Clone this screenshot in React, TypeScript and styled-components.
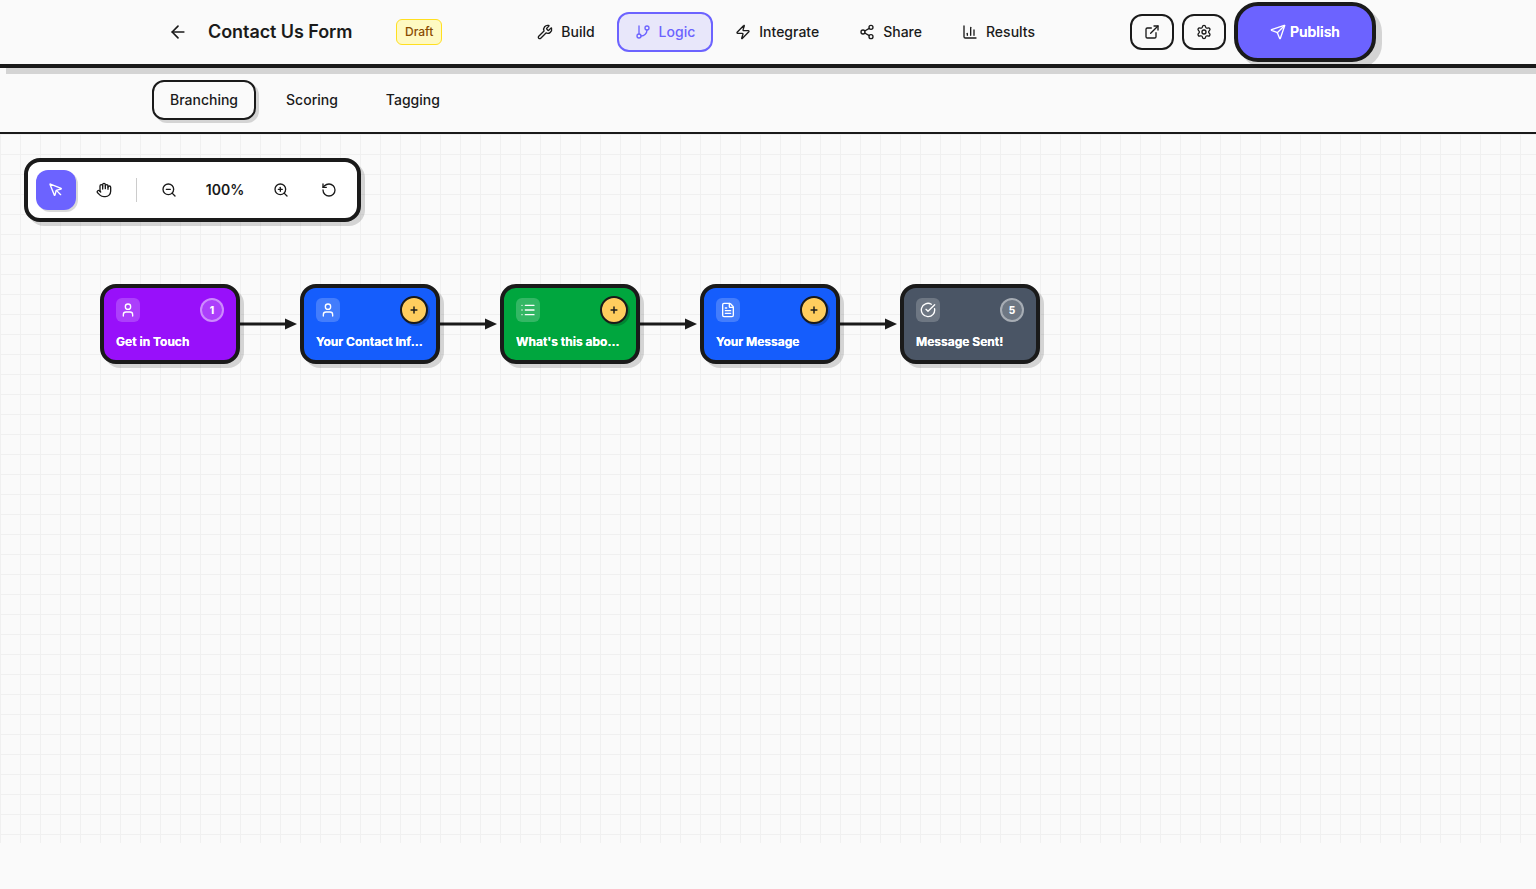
import React from "react";
import styled, { createGlobalStyle } from "styled-components";
import {
  ArrowLeft, Wrench, GitBranch, Zap, Share2, ChartColumn, ExternalLink, Settings, Send,
  MousePointer, Hand, ZoomOut, ZoomIn, RotateCcw, User, List, FileText, CircleCheckBig, Plus,
} from "lucide-react";

const INK = "#1a1a1a";
const PRIMARY = "#6c63ff";
const SHADOW = "rgba(0,0,0,0.15)";
const SANS = `Inter, "Liberation Sans", sans-serif`;

const Global = createGlobalStyle`
  html, body { margin: 0; padding: 0; height: 100%; background: #fafafa; overflow: hidden; }
  * { box-sizing: border-box; }
  body { font-family: ${SANS}; color: ${INK}; }
`;

const Header = styled.header`
  position: relative;
  z-index: 2;
  height: 68px;
  padding: 0 160px;
  display: flex;
  align-items: center;
  justify-content: space-between;
  background: #fafafa;
  border-bottom: 4px solid ${INK};
  box-shadow: 6px 6px 0 ${SHADOW};
`;
const LeftGroup = styled.div`
  display: flex;
  align-items: center;
`;
const BackButton = styled.button`
  width: 36px;
  height: 36px;
  margin-right: 12px;
  padding: 0;
  border: 0;
  background: none;
  color: ${INK};
  display: flex;
  align-items: center;
  justify-content: center;
`;
const Title = styled.h1`
  width: 144px;
  margin: 0 44px 0 0;
  font-family: Inter, sans-serif;
  font-size: 18px;
  font-weight: 600;
  line-height: 28px;
  letter-spacing: -0.07px;
  white-space: nowrap;
`;
const DraftBadge = styled.span`
  height: 26px;
  padding: 0 8px;
  display: flex;
  align-items: center;
  font-size: 12px;
  font-weight: 500;
  line-height: 16px;
  color: #894b00;
  background: #fef9c2;
  border: 1px solid #ffdf20;
  border-radius: 6px;
`;
const Nav = styled.nav`
  display: flex;
  align-items: center;
  gap: 4px;
`;
const NavItem = styled.button<{ $active?: boolean }>`
  height: 40px;
  padding: 0 16px;
  display: flex;
  align-items: center;
  gap: 8px;
  font-family: ${SANS};
  font-size: 14px;
  font-weight: 500;
  line-height: 20px;
  color: ${(p) => (p.$active ? PRIMARY : INK)};
  background: ${(p) => (p.$active ? "rgba(108,99,255,0.12)" : "transparent")};
  border: 2px solid ${(p) => (p.$active ? PRIMARY : "transparent")};
  border-radius: 12px;
`;
const Actions = styled.div`
  display: flex;
  align-items: center;
  gap: 8px;
`;
const IconAction = styled.button`
  width: 44px;
  height: 36px;
  padding: 0;
  display: flex;
  align-items: center;
  justify-content: center;
  color: ${INK};
  background: transparent;
  border: 2px solid ${INK};
  border-radius: 12px;
`;
const Publish = styled.button`
  width: 142px;
  height: 60px;
  padding: 0;
  display: flex;
  align-items: center;
  justify-content: center;
  gap: 4px;
  font-family: ${SANS};
  font-size: 14px;
  font-weight: 600;
  line-height: 20px;
  color: #fff;
  background: ${PRIMARY};
  border: 4px solid ${INK};
  border-radius: 24px;
  box-shadow: 6px 6px 0 ${SHADOW};
  text-shadow: 0 0 0.5px currentColor;
`;
const TabBar = styled.div`
  height: 66px;
  padding: 12px 152px;
  display: flex;
  gap: 12px;
  border-bottom: 2px solid ${INK};
`;
const Tab = styled.button<{ $active?: boolean }>`
  height: 40px;
  padding: 0 16px;
  font-family: ${SANS};
  font-size: 14px;
  font-weight: 500;
  line-height: 20px;
  color: ${INK};
  background: transparent;
  border: 2px solid ${(p) => (p.$active ? INK : "transparent")};
  border-radius: 12px;
  box-shadow: ${(p) => (p.$active ? `3px 3px 0 ${SHADOW}` : "none")};
`;
const Canvas = styled.main`
  position: relative;
  height: calc(100vh - 180px);
  overflow: hidden;
  background-color: #fafafa;
  background-image:
    linear-gradient(to right, #f0f0f0 1px, transparent 1px),
    linear-gradient(to bottom, #f0f0f0 1px, transparent 1px);
  background-size: 20px 20px;
`;
const Toolbar = styled.div`
  position: absolute;
  left: 24px;
  top: 24px;
  width: 337px;
  height: 64px;
  padding: 8px;
  display: flex;
  align-items: center;
  background: #fff;
  border: 4px solid ${INK};
  border-radius: 16px;
  box-shadow: 4px 4px 0 ${SHADOW};
`;
const ToolButton = styled.button<{ $active?: boolean }>`
  width: 40px;
  height: 40px;
  padding: 0;
  flex: none;
  display: flex;
  align-items: center;
  justify-content: center;
  color: ${(p) => (p.$active ? "#fff" : INK)};
  background: ${(p) => (p.$active ? PRIMARY : "transparent")};
  border: 0;
  border-radius: 12px;
  box-shadow: ${(p) => (p.$active ? `2px 2px 0 ${SHADOW}` : "none")};
  margin-right: ${(p) => (p.$active ? "8px" : "0")};
`;
const Divider = styled.div`
  width: 1px;
  height: 24px;
  margin: 0 12px;
  background: #ccc;
`;
const ZoomValue = styled.span`
  width: 72px;
  text-align: center;
  font-size: 14px;
  font-weight: 600;
  line-height: 20px;
`;
const ResetSlot = styled.div`
  margin-left: 8px;
`;
const Edges = styled.svg`
  position: absolute;
  inset: 0;
  width: 100%;
  height: 100%;
`;
const Node = styled.div<{ $x: number; $color: string }>`
  position: absolute;
  left: ${(p) => p.$x}px;
  top: 150px;
  width: 140px;
  height: 80px;
  padding: 10px 12px;
  background: ${(p) => p.$color};
  border: 4px solid ${INK};
  border-radius: 16px;
  box-shadow: 4px 4px 0 ${SHADOW};
  color: #fff;
`;
const NodeTop = styled.div`
  height: 24px;
  margin-bottom: 12px;
  display: flex;
  align-items: center;
  justify-content: space-between;
`;
const NodeIcon = styled.div`
  width: 24px;
  height: 24px;
  display: flex;
  align-items: center;
  justify-content: center;
  background: rgba(255,255,255,0.2);
  border-radius: 6px;
`;
const NumberBadge = styled.div`
  width: 24px;
  height: 24px;
  display: flex;
  align-items: center;
  justify-content: center;
  font-size: 10px;
  font-weight: 800;
  background: rgba(255,255,255,0.2);
  border: 2px solid rgba(255,255,255,0.4);
  border-radius: 50%;
`;
const PlusBadge = styled.div`
  width: 28px;
  height: 28px;
  flex: none;
  display: flex;
  align-items: center;
  justify-content: center;
  color: ${INK};
  background: #ffcd5e;
  border: 2px solid ${INK};
  border-radius: 50%;
  box-shadow: 2px 2px 0 rgba(0,0,0,0.2);
  margin-right: -4px;
`;
const NodeTitle = styled.div`
  font-size: 12px;
  font-weight: 700;
  line-height: 16px;
  white-space: nowrap;
  overflow: hidden;
  text-overflow: ellipsis;
  text-shadow: 0 0 0.6px currentColor;
`;

const nodes = [
  { title: "Get in Touch", color: "#9810fa", icon: User, badge: "1" },
  { title: "Your Contact Information", color: "#155dfc", icon: User },
  { title: "What's this about?", color: "#00a63e", icon: List },
  { title: "Your Message", color: "#155dfc", icon: FileText },
  { title: "Message Sent!", color: "#4a5565", icon: CircleCheckBig, badge: "5" },
];

const navItems = [
  { label: "Build", icon: Wrench },
  { label: "Logic", icon: GitBranch, active: true },
  { label: "Integrate", icon: Zap },
  { label: "Share", icon: Share2 },
  { label: "Results", icon: ChartColumn },
];

export default function App() {
  return (
    <>
      <Global />
      <Header>
        <LeftGroup>
          <BackButton aria-label="Back"><ArrowLeft size={20} /></BackButton>
          <Title>Contact Us Form</Title>
          <DraftBadge>Draft</DraftBadge>
        </LeftGroup>
        <Nav>
          {navItems.map(({ label, icon: Icon, active }) => (
            <NavItem key={label} $active={active}>
              <Icon size={16} />
              {label}
            </NavItem>
          ))}
        </Nav>
        <Actions>
          <IconAction aria-label="Open"><ExternalLink size={16} /></IconAction>
          <IconAction aria-label="Settings"><Settings size={16} /></IconAction>
          <Publish><Send size={16} />Publish</Publish>
        </Actions>
      </Header>
      <TabBar>
        <Tab $active>Branching</Tab>
        <Tab>Scoring</Tab>
        <Tab>Tagging</Tab>
      </TabBar>
      <Canvas>
        <Edges>
          {[240, 440, 640, 840].map((x) => (
            <g key={x}>
              <line x1={x} y1={190} x2={x + 46} y2={190} stroke={INK} strokeWidth={3} />
              <polygon points={`${x + 45},${184.5} ${x + 57},${190} ${x + 45},${195.5}`} fill={INK} />
            </g>
          ))}
        </Edges>
        {nodes.map(({ title, color, icon: Icon, badge }, i) => (
          <Node key={title} $x={100 + i * 200} $color={color}>
            <NodeTop>
              <NodeIcon><Icon size={16} /></NodeIcon>
              {badge ? <NumberBadge>{badge}</NumberBadge> : <PlusBadge><Plus size={10} strokeWidth={3.5} /></PlusBadge>}
            </NodeTop>
            <NodeTitle>{title}</NodeTitle>
          </Node>
        ))}
        <Toolbar>
          <ToolButton $active aria-label="Select"><MousePointer size={16} /></ToolButton>
          <ToolButton aria-label="Pan"><Hand size={16} /></ToolButton>
          <Divider />
          <ToolButton aria-label="Zoom out"><ZoomOut size={16} /></ToolButton>
          <ZoomValue>100%</ZoomValue>
          <ToolButton aria-label="Zoom in"><ZoomIn size={16} /></ToolButton>
          <ResetSlot>
            <ToolButton aria-label="Reset"><RotateCcw size={16} /></ToolButton>
          </ResetSlot>
        </Toolbar>
      </Canvas>
    </>
  );
}
